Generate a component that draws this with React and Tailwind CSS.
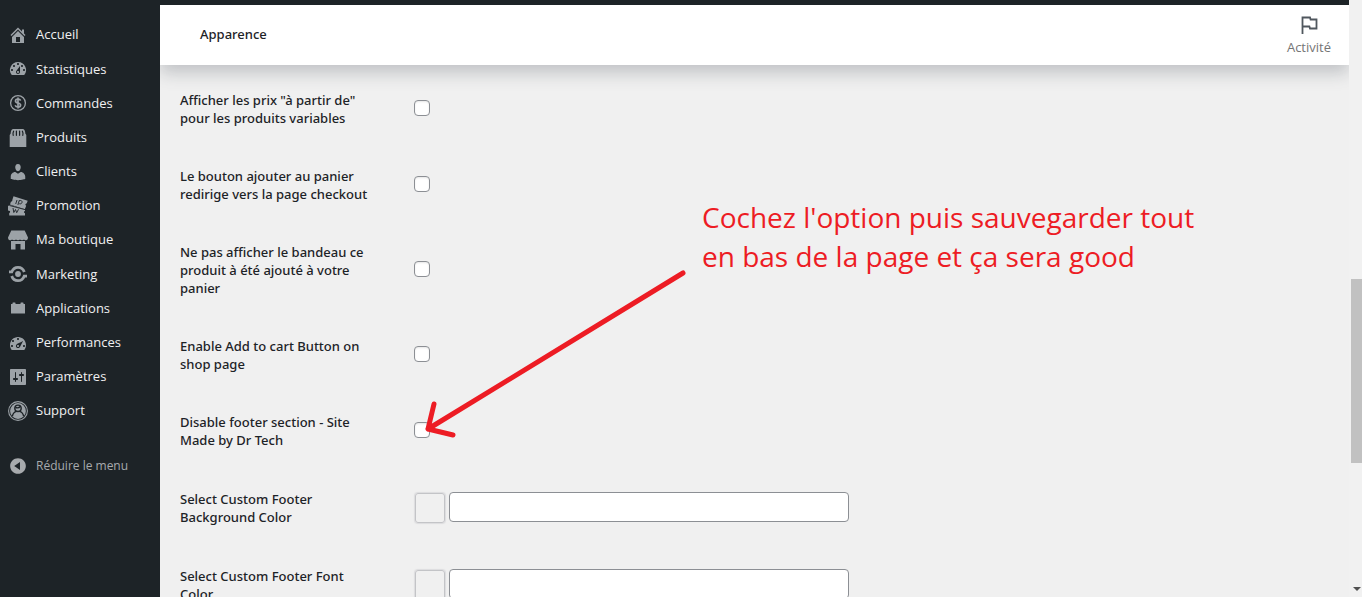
import React from "react";

const Icon = ({ children }) => (
  <svg
    xmlns="http://www.w3.org/2000/svg"
    className="h-5 w-5 shrink-0"
    viewBox="0 0 20 20"
    fill="currentColor"
    fillRule="evenodd"
    aria-hidden="true"
  >
    {children}
  </svg>
);

const icons = {
  home: (
    <path d="M16 8.5l1.53 1.53-1.06 1.06L10 4.6l-6.47 6.49-1.06-1.06L10 2.5l4 4v-2h2v4zm-6-2.46l6 5.99V18H4v-5.97zM12 17v-5H8v5h4z" />
  ),
  dashboard: (
    <path d="M3.76 16h12.48A7.998 7.998 0 0 0 10 3a7.998 7.998 0 0 0-6.24 13zM10 4c.55 0 1 .45 1 1s-.45 1-1 1-1-.45-1-1 .45-1 1-1zM6 6c.55 0 1 .45 1 1s-.45 1-1 1-1-.45-1-1 .45-1 1-1zm8 0c.55 0 1 .45 1 1s-.45 1-1 1-1-.45-1-1 .45-1 1-1zm-5.370 5.550L12 7v6c0 1.100-.9 2-2 2s-2-.9-2-2c0-.57.24-1.080.63-1.450zM4 10c.55 0 1 .45 1 1s-.45 1-1 1-1-.45-1-1 .45-1 1-1zm12 0c.55 0 1 .45 1 1s-.45 1-1 1-1-.45-1-1 .45-1 1-1zm-5 3c0-.55-.45-1-1-1s-1 .45-1 1 .45 1 1 1 1-.45 1-1z" />
  ),
  orders: (
    <g fill="none" stroke="currentColor">
      <circle cx="10" cy="10" r="7.4" strokeWidth="1.3" />
      <path
        d="M12.6 7.6C12.2 6.5 11.3 6 10 6 8.5 6 7.5 6.8 7.5 7.9c0 2.8 5.1 1.3 5.1 4.1 0 1.2-1.1 2-2.6 2-1.4 0-2.4-.6-2.8-1.8M10 4.5v11"
        strokeWidth="1.7"
      />
    </g>
  ),
  products: (
    <>
      <path d="M5 1h10c1.500 0 2.300 2.500 2.300 4.500L18.300 7v12H1.700V7l1-1.500C2.700 3.500 3.500 1 5 1z" />
      <g fill="none" stroke="#1d2327" strokeWidth="1.200" strokeLinecap="round">
        <path d="M5.600 3.200C4.900 4.500 4.700 5.500 5.200 7.300M8.400 3v4.300M11.600 3v4.300M14.400 3.200c.7 1.300.9 2.300.4 4.100" />
      </g>
    </>
  ),
  users: (
    <path d="M10 9.250c-2.270 0-2.730-3.440-2.730-3.440C7 4.020 7.820 2 9.970 2c2.160 0 2.980 2.020 2.710 3.810 0 0-.41 3.440-2.680 3.440zm0 2.570L12.720 10c2.390 0 4.520 2.330 4.520 4.530v2.490s-3.650 1.130-7.240 1.130c-3.650 0-7.240-1.130-7.240-1.130v-2.490c0-2.250 1.940-4.480 4.470-4.480z" />
  ),
  tickets: (
    <>
      <path d="M5.5.3l14.200 4.500-1 2.700c-.9 0-1.400.6-1.300 1.500l.8.700-1.400 3.500L2 8.500l.9-2.700c1 0 1.600-.8 1.400-1.700z" />
      <path d="M0 10l2-1 15 4.500V15c-.8.2-1.200.8-1 1.500l1 .7v2.300H1.200V17c.9-.3 1.200-1.200.6-2L0 14.500z" />
      <g fill="none" stroke="#1d2327" strokeWidth="0.900">
        <path d="M9 4l-1.300 4M11 4.800c2-.8 3.400 0 3 1.700-.3 1.200-1.600 1.700-2.800 1.200M11.200 4.500L9.900 9" />
        <path d="M1.500 9.500l15.800 4.200M5 12l.8 4.500 1.700-3 1.200 3.200 1.800-3.400" />
      </g>
    </>
  ),
  store: (
    <>
      <path d="M3.300.5h13.400L20 7.500c0 1.500-.8 2.700-2 2.700s-1.600-.2-2-.7c-.4.500-1.100.7-2 .7s-1.600-.2-2-.7c-.4.500-1.100.7-2 .7s-1.600-.2-2-.7c-.4.500-1.100.7-2 .7s-1.600-.2-2-.7c-.4.500-.8.700-2 .7s-2-1.200-2-2.700z" />
      <path d="M3 11h14v8.500h-4.500V14h-5v5.500H3z" />
    </>
  ),
  marketing: (
    <>
      <circle cx="10" cy="10" r="2.900" />
      <g fill="none" stroke="currentColor" strokeWidth="2.800">
        <path d="M1 7.800h2.800C5 4.800 7.300 3.300 10 3.300c3 0 5.300 1.700 6.300 4.700" />
        <path d="M19 12.200h-2.800c-1.200 3-3.500 4.500-6.200 4.500-3 0-5.300-1.700-6.300-4.700" />
      </g>
    </>
  ),
  apps: (
    <path d="M3 6h1.500V5c0-.3.200-.5.500-.5h2c.3 0 .5.200.5.500v1h5V5c0-.3.200-.5.5-.5h2c.3 0 .5.200.5.500v1H17v9.500H3z" />
  ),
  performance: (
    <path d="M3.760 17.010h12.480c1.110-1.360 1.760-3.100 1.760-5C18 7.590 14.420 4 10 4s-8 3.590-8 8.010c0 1.900.66 3.640 1.760 5zM9 6c0-.55.45-1 1-1s1 .45 1 1c0 .56-.45 1-1 1s-1-.44-1-1zM4 8c0-.55.45-1 1-1s1 .45 1 1c0 .56-.45 1-1 1s-1-.44-1-1zm4.520 3.400c.84-.83 6.510-3.500 6.510-3.500s-2.660 5.680-3.490 6.510c-.84.84-2.180.84-3.020 0-.83-.83-.83-2.180 0-3.010zM3 13c0-.55.45-1 1-1s1 .45 1 1c0 .56-.45 1-1 1s-1-.44-1-1zm6 0c0 .55.45 1 1 1s1-.45 1-1-.45-1-1-1-1 .45-1 1zm6 0c0-.55.45-1 1-1s1 .45 1 1c0 .56-.45 1-1 1s-1-.44-1-1z" />
  ),
  settings: (
    <path d="M18 17V3c0-.55-.45-1-1-1H3c-.55 0-1 .45-1 1v14c0 .55.45 1 1 1h14c.55 0 1-.45 1-1zM8 11h1c.55 0 1 .45 1 1s-.45 1-1 1H8v1.500c0 .28-.22.5-.5.5s-.5-.22-.5-.5V13H6c-.55 0-1-.45-1-1s.45-1 1-1h1V5.500c0-.28.22-.5.5-.5s.5.22.5.500V11zm5-2h-1c-.55 0-1-.45-1-1s.45-1 1-1h1V5.500c0-.28.22-.5.5-.5s.5.22.5.500V7h1c.55 0 1 .45 1 1s-.45 1-1 1h-1v5.500c0 .28-.22.5-.5.5s-.5-.22-.5-.5V9z" />
  ),
  support: (
    <>
      <circle cx="10" cy="10" r="9.400" fill="none" stroke="currentColor" strokeWidth="1.100" />
      <circle cx="10" cy="10" r="7.900" />
      <g fill="none" stroke="#1d2327" strokeWidth="1.400">
        <circle cx="10" cy="7.300" r="3.200" />
        <path d="M4.300 15.200c.8-3 2.600-4.500 4.200-4.800M11.500 10.400c1.600.3 3.400 1.800 4.200 4.800M7.300 6.500c2 .6 4 .2 5-1" />
      </g>
    </>
  ),
  collapse: (
    <path d="M10 2.160c4.330 0 7.840 3.510 7.840 7.840s-3.510 7.840-7.840 7.840S2.160 14.330 2.160 10 5.670 2.160 10 2.160zm2 11.720V6.120L6.180 9.970z" />
  ),
};

const menu = [
  { icon: "home", label: "Accueil" },
  { icon: "dashboard", label: "Statistiques" },
  { icon: "orders", label: "Commandes" },
  { icon: "products", label: "Produits" },
  { icon: "users", label: "Clients" },
  { icon: "tickets", label: "Promotion" },
  { icon: "store", label: "Ma boutique" },
  { icon: "marketing", label: "Marketing" },
  { icon: "apps", label: "Applications" },
  { icon: "performance", label: "Performances" },
  { icon: "settings", label: "Paramètres" },
  { icon: "support", label: "Support" },
];

const fields = [
  { id: "price_from", label: 'Afficher les prix "à partir de" pour les produits variables' },
  { id: "redirect", label: "Le bouton ajouter au panier redirige vers la page checkout" },
  { id: "banner", label: "Ne pas afficher le bandeau ce produit à été ajouté à votre panier" },
  { id: "shop_cart", label: "Enable Add to cart Button on shop page" },
  { id: "footer", label: "Disable footer section - Site Made by Dr Tech" },
  { id: "footer_bg", label: "Select Custom Footer Background Color", type: "color" },
  { id: "footer_font", label: "Select Custom Footer Font Color", type: "color" },
];

const Sidebar = () => (
  <nav className="w-40 shrink-0 bg-[#1d2327] pt-[18px] text-[13px] text-[#f0f0f1]">
    <ul className="flex h-[410px] flex-col">
      {menu.map((item) => (
        <li key={item.label} className="flex-1">
          <a href="#" className="flex h-full items-center gap-2 pl-2">
            <span className="text-[#9ca2a7]">
              <Icon>{icons[item.icon]}</Icon>
            </span>
            {item.label}
          </a>
        </li>
      ))}
    </ul>
    <button className="mt-[21px] flex h-[34px] w-full items-center gap-2 pl-2 text-xs text-[#a7aaad]">
      <Icon>{icons.collapse}</Icon>
      Réduire le menu
    </button>
  </nav>
);

const Header = () => (
  <header className="relative flex h-[65px] items-center justify-between border-t-[5px] border-[#1d2327] bg-white pr-[18px] pl-10 shadow-[0_8px_16px_0_rgba(85,93,102,0.3)]">
    <h1 className="font-['Noto_Sans',sans-serif] text-[13px] font-medium text-[#1d2327]">
      Apparence
    </h1>
    <button className="flex flex-col items-center text-[13px] leading-5 text-[#757575]">
      <svg
        xmlns="http://www.w3.org/2000/svg"
        className="h-6 w-6"
        viewBox="0 0 24 24"
        fill="none"
        stroke="#50575e"
        strokeWidth="1.800"
      >
        <path d="M5.500 21V4.500H13l.6 2H19.500v9H13l-.6-2H5.500" />
      </svg>
      Activité
    </button>
  </header>
);

const Field = ({ field }) => (
  <tr className={field.type === "color" ? "h-[77px]" : ""}>
    <th
      scope="row"
      className="w-[224px] py-5 pr-6 text-left align-middle font-['Noto_Sans',sans-serif] text-[13px] leading-[18px] font-medium text-[#1d2327]"
    >
      <label htmlFor={field.id}>{field.label}</label>
    </th>
    <td className="px-[10px] align-middle">
      {field.type === "color" ? (
        <div className="flex gap-1">
          <button
            aria-label={field.label}
            className="mt-px ml-px h-[30px] w-[30px] rounded-[3px] border border-[#c3c4c7] shadow-[0_0_1px_1px_#dcdcde]"
          />
          <input
            id={field.id}
            type="text"
            className="h-[30px] w-[400px] rounded border border-[#8c8f94] bg-white px-2"
          />
        </div>
      ) : (
        <input
          id={field.id}
          type="checkbox"
          className="mb-[3px] block h-4 w-4 appearance-none rounded border border-[#8c8f94] bg-white shadow-[inset_0_1px_2px_rgba(0,0,0,0.1)]"
        />
      )}
    </td>
  </tr>
);

const Scrollbar = () => (
  <div className="flex w-[13px] shrink-0 flex-col items-end justify-between bg-[#f1f1f1]">
    <div className="mt-[279px] h-[184px] w-[11px] bg-[#c1c1c1]" />
    <svg className="mb-1 h-2 w-[9px]" viewBox="0 0 9 8" fill="#505050" aria-hidden="true">
      <path d="M0 2h8L4 6z" />
    </svg>
  </div>
);

// Red note and arrow drawn on top of the settings table
const Annotation = () => (
  <>
    <p className="absolute top-[198px] left-[542px] w-[520px] text-[28px] leading-[39px] text-[#ed1c24]">
      Cochez l'option puis sauvegarder tout en bas de la page et ça sera good
    </p>
    <svg
      className="pointer-events-none absolute top-[265px] left-[254px] h-[180px] w-[280px]"
      viewBox="0 0 280 180"
      fill="none"
      stroke="#ed1c24"
      strokeWidth="5"
      strokeLinecap="round"
      strokeLinejoin="round"
      aria-hidden="true"
    >
      <path d="M269 8L14 164M20 139l-6 25 25 6" />
    </svg>
  </>
);

const App = () => {
  return (
    <div className="flex h-screen overflow-hidden bg-[#f0f0f0] font-['Open_Sans',sans-serif]">
      <Sidebar />
      <main className="relative min-w-0 flex-1 overflow-hidden">
        <Header />
        <table className="mt-[6px] ml-5">
          <tbody>
            {fields.map((field) => (
              <Field key={field.id} field={field} />
            ))}
          </tbody>
        </table>
        <Annotation />
      </main>
      <Scrollbar />
    </div>
  );
};

export default App;
